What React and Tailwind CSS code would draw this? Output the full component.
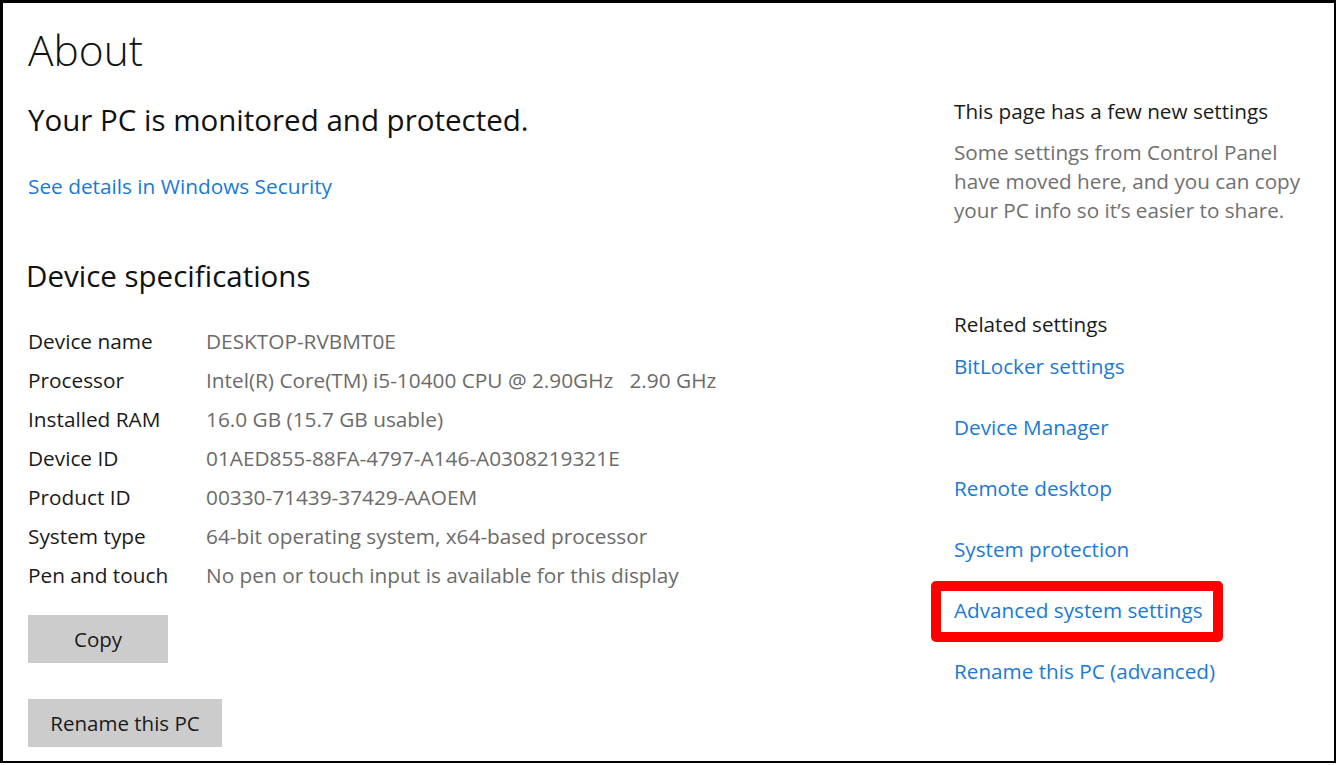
import React from "react";

const specs = [
  ["Device name", "DESKTOP-RVBMT0E"],
  ["Processor", "Intel(R) Core(TM) i5-10400 CPU @ 2.90GHz   2.90 GHz"],
  ["Installed RAM", "16.0 GB (15.7 GB usable)"],
  ["Device ID", "01AED855-88FA-4797-A146-A0308219321E"],
  ["Product ID", "00330-71439-37429-AAOEM"],
  ["System type", "64-bit operating system, x64-based processor"],
  ["Pen and touch", "No pen or touch input is available for this display"],
];

const links = [
  "BitLocker settings",
  "Device Manager",
  "Remote desktop",
  "System protection",
  "Advanced system settings",
  "Rename this PC (advanced)",
];

export default function App() {
  return (
    <div
      className="w-[1338px] h-[765px] bg-white"
      style={{ fontFamily: '"Open Sans", "Noto Sans", sans-serif' }}
    >
      <div className="w-[1336px] h-[763px] border-l-[3px] border-t-[3px] border-r-2 border-b-2 border-black flex">
        {/* Left column */}
        <div className="w-[926px] pl-[25px] flex flex-col">
          <div className="mt-[23px] h-[48px] leading-[48px] text-[42.5px] font-light text-[#111]">About</div>
          <div className="mt-[28px] h-[36px] leading-[36px] text-[29.5px] text-[#111]">Your PC is monitored and protected.</div>
          <div className="mt-[34px] h-[28px] leading-[28px] text-[20.8px] text-[#1a7ad4]">See details in Windows Security</div>
          <div className="mt-[58px] h-[36px] leading-[36px] text-[29.5px] text-[#111] -ml-[2px]">Device specifications</div>
          <div className="mt-[28px] flex flex-col">
            {specs.map(([k, v]) => (
              <div key={k} className="flex h-[39px] items-center text-[20.8px]">
                <div className="w-[178px] text-[#1a1a1a]">{k}</div>
                <div className="text-[#6b6b6b] whitespace-pre">{v}</div>
              </div>
            ))}
          </div>
          <button className="mt-[20px] w-[140px] h-[48px] bg-[#cccccc] text-[20.5px] text-[#1a1a1a] flex items-center justify-center">
            Copy
          </button>
          <button className="mt-[36px] w-[194px] h-[48px] bg-[#cccccc] text-[20.5px] text-[#1a1a1a] flex items-center justify-center">
            Rename this PC
          </button>
        </div>
        {/* Right column */}
        <div className="flex-1 pl-[25px] flex flex-col">
          <div className="mt-[94px] h-[28px] leading-[28px] text-[20.7px] text-[#1a1a1a]">This page has a few new settings</div>
          <div className="mt-[13px] leading-[29px] text-[20.7px] text-[#707070] w-[380px]">
            Some settings from Control Panel<br />
            have moved here, and you can copy<br />
            your PC info so it’s easier to share.
          </div>
          <div className="mt-[85px] h-[28px] leading-[28px] text-[20.7px] text-[#1a1a1a]">Related settings</div>
          <div className="mt-[14px] flex flex-col gap-[33px]">
            {links.map((l) => (
              <div key={l} className="relative h-[28px] leading-[28px] text-[20.7px] text-[#1a7ad4]">
                {l}
                {l === "Advanced system settings" && (
                  <div className="absolute -left-[23px] -top-[15px] w-[292px] h-[61px] border-[10px] border-[#ff0000] rounded-[5px]" />
                )}
              </div>
            ))}
          </div>
        </div>
      </div>
    </div>
  );
}
